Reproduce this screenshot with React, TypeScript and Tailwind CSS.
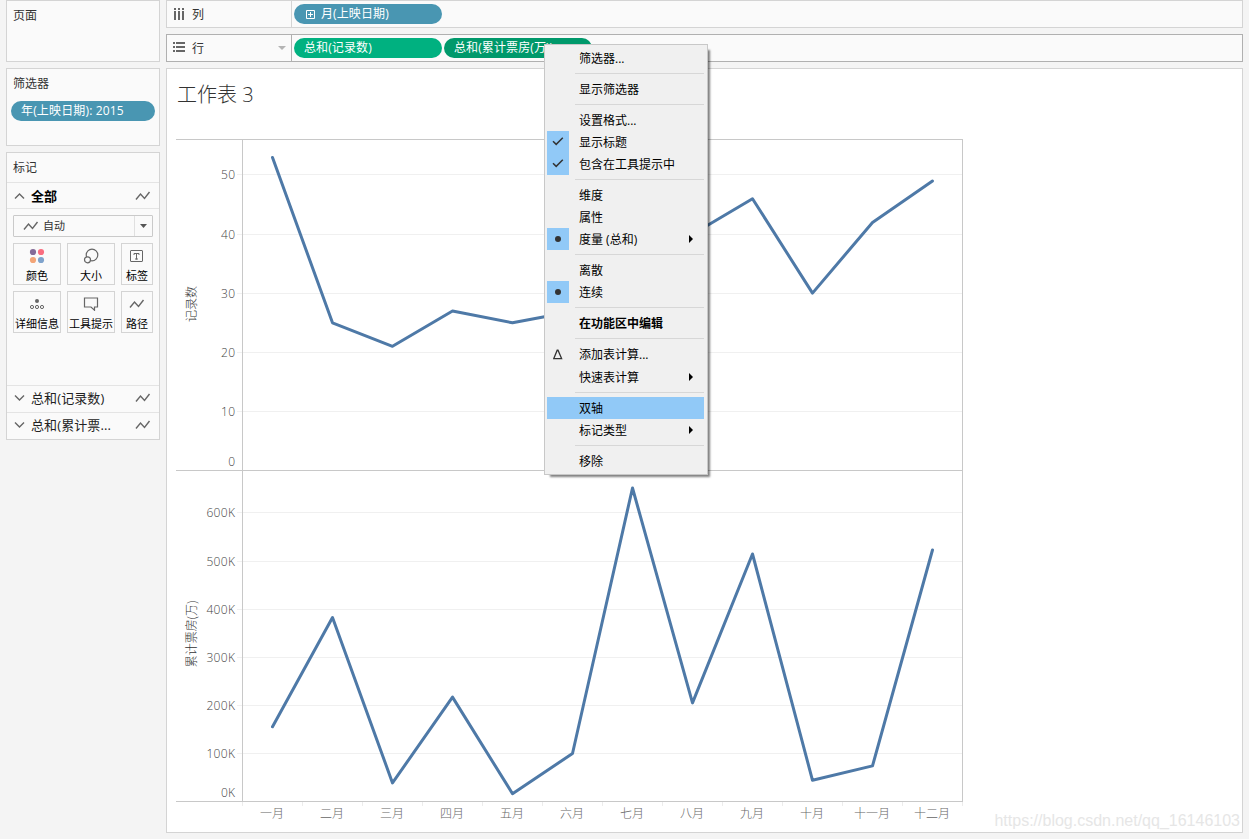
import type { ReactNode } from "react";

const MONTHS = ["一月", "二月", "三月", "四月", "五月", "六月", "七月", "八月", "九月", "十月", "十一月", "十二月"];

// Chart geometry, in svg units (1 unit = 1px)
const LEFT = 66;
const RIGHT = 786;
const STEP = 60;

interface Pane {
    title: string;
    titleY: number;
    ticks: { label: string; y: number }[];
    zero: { label: string; y: number };
    ys: number[];
}

const PANES: Pane[] = [
    {
        title: "记录数",
        titleY: 165,
        ticks: [
            { label: "50", y: 35 },
            { label: "40", y: 95 },
            { label: "30", y: 154 },
            { label: "20", y: 213 },
            { label: "10", y: 272 },
        ],
        zero: { label: "0", y: 322 },
        ys: [18, 183.3, 206.8, 171.5, 183.3, 172, 153.6, 94.7, 59.2, 153.6, 83, 41.5],
    },
    {
        title: "累计票房(万)",
        titleY: 495,
        ticks: [
            { label: "600K", y: 373 },
            { label: "500K", y: 422 },
            { label: "400K", y: 470 },
            { label: "300K", y: 518 },
            { label: "200K", y: 566 },
            { label: "100K", y: 614 },
        ],
        zero: { label: "0K", y: 653 },
        ys: [587.3, 478, 643.4, 557.6, 654.2, 614, 348.5, 563.4, 414.5, 640.8, 626.4, 410.5],
    },
];

const Chart = () => (
    <svg width="800" height="692" className="block font-['Open_Sans','Noto_Sans_CJK_SC',sans-serif] text-[12px] font-light">
        {PANES.map(pane => (
            <g key={pane.title}>
                {pane.ticks.map(t => (
                    <g key={t.label}>
                        <path d={`M61 ${t.y + 0.5}H${RIGHT}`} stroke="#f0f0f0" />
                        <text x="59.5" y={t.y + 5} textAnchor="end" fill="#444" letterSpacing="0.4">{t.label}</text>
                    </g>
                ))}
                <text x="59.5" y={pane.zero.y + 5} textAnchor="end" fill="#444" letterSpacing="0.4">{pane.zero.label}</text>
                <text transform={`translate(20 ${pane.titleY}) rotate(-90)`} textAnchor="middle" fill="#333">{pane.title}</text>
                <polyline
                    points={pane.ys.map((y, i) => `${LEFT + 30.5 + i * STEP},${y + 0.5}`).join(" ")}
                    fill="none"
                    stroke="#4e79a7"
                    strokeWidth="3"
                    strokeLinejoin="round"
                    strokeLinecap="round"
                />
            </g>
        ))}
        {MONTHS.map((m, i) => (
            <g key={m}>
                <path d={`M${LEFT + i * STEP + 0.5} 663v4`} stroke="#ececec" />
                <text x={LEFT + 30 + i * STEP} y="679" textAnchor="middle" fill="#666">{m}</text>
            </g>
        ))}
        <path d={`M${RIGHT + 0.5} 663v4`} stroke="#ececec" />
        <path d="M0 .5H787M0 331.5H787M0 662.5H787M66.5 0V663M786.5 0V663" stroke="#c8c8c8" fill="none" />
    </svg>
);

const LineIcon = () => (
    <svg width="16" height="12" viewBox="0 0 16 12" fill="none" stroke="#666" strokeWidth="1.4">
        <path d="M1 9.5 5.5 4l4 4.5L14.5 2" />
    </svg>
);

const Chevron = ({ up = false }: { up?: boolean }) => (
    <svg width="11" height="8" viewBox="0 0 11 8" fill="none" stroke="#666" strokeWidth="1.4">
        <path d={up ? "M1 6.5 5.5 2 10 6.5" : "M1 1.5 5.5 6 10 1.5"} />
    </svg>
);

const MarkButton = ({ label, children }: { label: string; children: ReactNode }) => (
    <div className="flex h-[42px] flex-col items-center border border-[#d4d4d4] bg-[#fafafa] pt-[3px]">
        <div className="flex h-[18px] items-center justify-center">{children}</div>
        <span className="mt-[3px] whitespace-nowrap text-[11px] leading-4 text-black">{label}</span>
    </div>
);

const MarksCard = () => (
    <section className="h-[288px] border border-[#d4d4d4] bg-[#fafafa]">
        <div className="h-[29px] pl-1.5 leading-[29px]">标记</div>
        <div className="flex h-[27px] items-center border-y border-[#e4e4e4] pl-[7px] pr-2">
            <Chevron up />
            <span className="ml-1.5 flex-1 text-[13px] font-bold text-black">全部</span>
            <LineIcon />
        </div>
        <div className="h-[176px] px-1.5 pt-1.5">
            <div className="flex h-[22px] items-center rounded-[1px] border border-[#cacaca]">
                <div className="flex flex-1 items-center pl-[9px]">
                    <LineIcon />
                    <span className="ml-1 text-[11px]">自动</span>
                </div>
                <div className="flex h-full w-[18px] items-center justify-center border-l border-[#e0e0e0]">
                    <svg width="7" height="4" viewBox="0 0 7 4"><path d="M0 0h7L3.5 4z" fill="#555" /></svg>
                </div>
            </div>
            <div className="mt-1.5 grid grid-cols-[48px_48px_32px] gap-1.5">
                <MarkButton label="颜色">
                    <svg width="16" height="16" viewBox="0 0 16 16">
                        <circle cx="4" cy="4" r="3.1" fill="#856b98" />
                        <circle cx="12" cy="4" r="3.1" fill="#fa6e80" />
                        <circle cx="4" cy="12" r="3.1" fill="#f3a578" />
                        <circle cx="12" cy="12" r="3.1" fill="#7fa3cc" />
                    </svg>
                </MarkButton>
                <MarkButton label="大小">
                    <svg width="16" height="16" viewBox="0 0 16 16" fill="none" stroke="#666" strokeWidth="1.2">
                        <circle cx="9" cy="7" r="5.8" />
                        <circle cx="4.5" cy="11.8" r="3" fill="#fafafa" />
                    </svg>
                </MarkButton>
                <MarkButton label="标签">
                    <svg width="14" height="14" viewBox="0 0 14 14" fill="none" stroke="#666">
                        <rect x=".5" y="1.5" width="12" height="11" rx=".5" />
                        <path d="M4 6V4.5h5V6M6.5 4.5v6M5 10h3" />
                    </svg>
                </MarkButton>
                <MarkButton label="详细信息">
                    <svg width="16" height="14" viewBox="0 0 16 14" fill="none" stroke="#666">
                        <circle cx="8" cy="4" r="2" fill="#666" stroke="none" />
                        <circle cx="3" cy="10" r="1.6" />
                        <circle cx="8" cy="10" r="1.6" />
                        <circle cx="13" cy="10" r="1.6" />
                    </svg>
                </MarkButton>
                <MarkButton label="工具提示">
                    <svg width="16" height="14" viewBox="0 0 16 14" fill="none" stroke="#666" strokeWidth="1.2">
                        <path d="M1.5 1h13v9h-3v3.2L8 10H1.5z" />
                    </svg>
                </MarkButton>
                <MarkButton label="路径"><LineIcon /></MarkButton>
            </div>
        </div>
        {["总和(记录数)", "总和(累计票..."].map(name => (
            <div key={name} className="flex h-[27px] items-center border-t border-[#e4e4e4] pb-0.5 pl-[7px] pr-2">
                <Chevron />
                <span className="ml-1.5 flex-1 whitespace-nowrap text-[13px] tracking-[0.1px] text-[#222]">{name}</span>
                <LineIcon />
            </div>
        ))}
    </section>
);

interface MenuItem {
    label: string;
    mark?: "check" | "dot" | "delta";
    submenu?: boolean;
    bold?: boolean;
    active?: boolean;
}

const MENU: MenuItem[][] = [
    [{ label: "筛选器..." }],
    [{ label: "显示筛选器" }],
    [{ label: "设置格式..." }, { label: "显示标题", mark: "check" }, { label: "包含在工具提示中", mark: "check" }],
    [{ label: "维度" }, { label: "属性" }, { label: "度量 (总和)", mark: "dot", submenu: true }],
    [{ label: "离散" }, { label: "连续", mark: "dot" }],
    [{ label: "在功能区中编辑", bold: true }],
    [{ label: "添加表计算...", mark: "delta" }, { label: "快速表计算", submenu: true }],
    [{ label: "双轴", active: true }, { label: "标记类型", submenu: true }],
    [{ label: "移除" }],
];

const MenuRow = ({ item }: { item: MenuItem }) => (
    <div className={`flex items-center ${item.mark === "delta" ? "h-[23px] pb-px" : "h-[22px]"} ${item.active ? "bg-[#91c9f7]" : ""}`}>
        <div className={`flex h-[22px] w-[22px] items-center justify-center ${item.mark === "check" || item.mark === "dot" ? "bg-[#91c9f7]" : ""}`}>
            {item.mark === "check" && (
                <svg width="12" height="10" viewBox="0 0 12 10" fill="none" stroke="#333" strokeWidth="1.5">
                    <path d="M1 4.2 4.2 7.4 10.8 .8" />
                </svg>
            )}
            {item.mark === "dot" && <span className="size-1.5 rounded-full bg-[#333]" />}
            {item.mark === "delta" && (
                <svg width="10" height="11" viewBox="0 0 10 11" fill="none" stroke="#333" strokeWidth="1.3">
                    <path d="M4.2 1.2h.8L8.6 9.6H.8z" />
                </svg>
            )}
        </div>
        <span className={`ml-2.5 flex-1 whitespace-nowrap pt-0.5 ${item.bold ? "font-bold" : ""}`}>{item.label}</span>
        {item.submenu && (
            <svg width="4" height="8" viewBox="0 0 4 8" className="mr-[11px]"><path d="M0 0l4 4-4 4z" fill="#000" /></svg>
        )}
    </div>
);

const ContextMenu = () => (
    <div className="absolute left-[544px] top-[44px] w-[164px] border border-[#c8c8c8] bg-[#f0f0f0] py-0.5 pl-0.5 pr-[3px] text-black shadow-[4px_4px_2px_-2px_rgba(0,0,0,0.5)]">
        {MENU.map((group, i) => (
            <div key={i}>
                {i > 0 && <div className="my-1 ml-7 h-px bg-[#d7d7d7]" />}
                {group.map(item => <MenuRow key={item.label} item={item} />)}
            </div>
        ))}
    </div>
);

const Shelf = ({ icon, name, focused = false, children }: { icon: ReactNode; name: string; focused?: boolean; children: ReactNode }) => (
    <div className={`flex h-7 border bg-[#fafafa] ${focused ? "border-[#b0b0b0]" : "border-[#d4d4d4]"}`}>
        <div className={`flex w-[125px] items-center border-r pl-1.5 ${focused ? "border-[#b0b0b0]" : "border-[#d4d4d4]"}`}>
            {icon}
            <span className="ml-1.5 flex-1 pt-px">{name}</span>
            {focused && <svg width="8" height="4" viewBox="0 0 8 4" className="mr-[5px]"><path d="M0 0h8L4 4z" fill="#b4b4b4" /></svg>}
        </div>
        <div className="flex items-center gap-0.5 pl-0.5 text-white">{children}</div>
    </div>
);

export default function App() {
    return (
        <div className="relative flex h-[839px] w-[1249px] gap-1.5 overflow-hidden bg-[#f4f4f4] px-1.5 font-['Open_Sans','Noto_Sans_CJK_SC',sans-serif] text-[12px] leading-[18px] text-[#333]">
            {/* Side cards */}
            <aside className="flex w-[154px] flex-col gap-1.5">
                <section className="h-[62px] border border-[#d4d4d4] bg-[#fafafa] pl-1.5 pt-1.5">页面</section>
                <section className="h-[78px] border border-[#d4d4d4] bg-[#fafafa] px-1 pt-1.5">
                    <div className="pl-0.5">筛选器</div>
                    <div className="mt-2 h-5 rounded-full bg-[#4996b2] pl-2.5 leading-5 tracking-[0.15px] text-white">年(上映日期): 2015</div>
                </section>
                <MarksCard />
            </aside>

            {/* Shelves and worksheet */}
            <main className="flex w-[1077px] flex-col gap-1.5">
                <Shelf
                    name="列"
                    icon={
                        <svg width="13" height="12" viewBox="0 0 13 12" fill="#666">
                            <path d="M1 0h2v2H1zM1 3h2v9H1zM5 0h2v2H5zM5 3h2v9H5zM9 0h2v2H9zM9 3h2v9H9z" />
                        </svg>
                    }
                >
                    <div className="flex h-5 w-[148px] items-center rounded-full bg-[#4996b2] pl-3">
                        <svg width="9" height="9" viewBox="0 0 9 9" fill="none" stroke="#fff"><path d="M.5.5h8v8h-8zM2 4.5h5M4.5 2v5" /></svg>
                        <span className="ml-1.5 tracking-[0.1px]">月(上映日期)</span>
                    </div>
                </Shelf>
                <Shelf
                    name="行"
                    focused
                    icon={
                        <svg width="13" height="12" viewBox="0 0 13 12" fill="#666">
                            <path d="M0 0h2v2H0zM3 0h9v2H3zM0 4h2v2H0zM3 4h9v2H3zM0 8h2v2H0zM3 8h9v2H3z" />
                        </svg>
                    }
                >
                    <div className="h-5 w-[148px] rounded-full bg-[#00b180] pl-2.5 leading-5 tracking-[0.1px]">总和(记录数)</div>
                    <div className="h-5 w-[148px] rounded-full bg-[#00996b] pl-2.5 leading-5 tracking-[0.1px]">总和(累计票房(万))</div>
                </Shelf>
                <section className="h-[765px] border border-[#d4d4d4] bg-white pl-[9px]">
                    <h1 className="h-[70px] pl-px pt-[11px] text-[20px] font-light leading-[30px]">工作表 3</h1>
                    <Chart />
                </section>
            </main>

            <ContextMenu />
            <div className="absolute bottom-1.5 right-[9px] whitespace-nowrap font-['Liberation_Sans',sans-serif] text-[16px] leading-6 text-[#e6e6e6]">
                https://blog.csdn.net/qq_16146103
            </div>
        </div>
    );
}
